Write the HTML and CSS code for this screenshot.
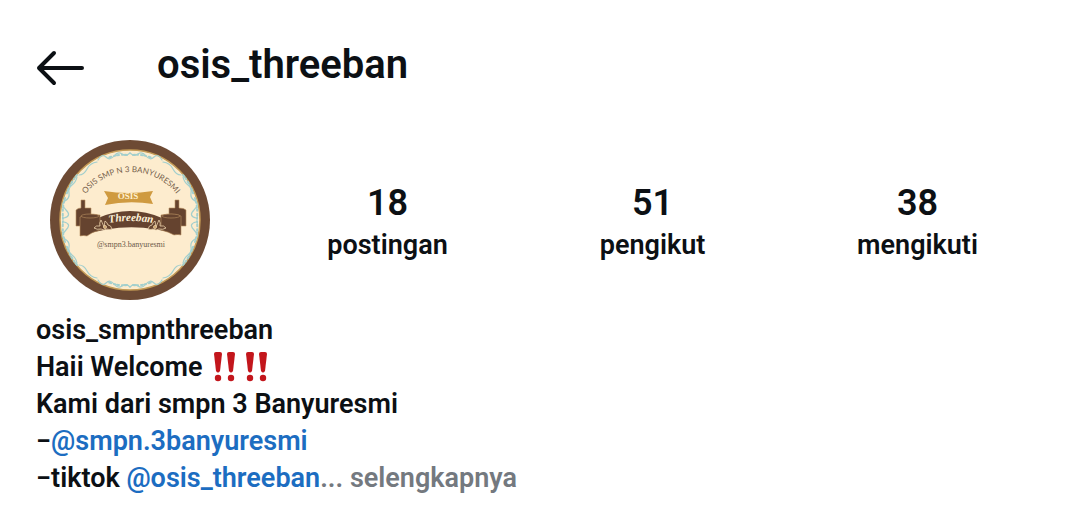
FILE: index.html
```html
<!DOCTYPE html>
<html lang="id">
<head>
<meta charset="utf-8">
<meta name="viewport" content="width=device-width, initial-scale=1">
<title>osis_threeban</title>
<link rel="stylesheet" href="styles.css">
</head>
<body>
<header class="topbar">
  <button class="back" type="button" aria-label="Kembali">
    <svg class="back-icon" viewBox="0 0 50 36" fill="none" stroke="currentColor" stroke-width="4" stroke-linecap="round" stroke-linejoin="round" aria-hidden="true">
      <path d="M46 18H3M18 3L3 18l15 15"/>
    </svg>
  </button>
  <h1 class="username">osis_threeban</h1>
</header>
<main class="profile">
  <section class="summary">
    <svg class="avatar" viewBox="0 0 160 160" role="img" aria-label="Logo OSIS SMPN 3 Banyuresmi">
      <defs>
        <path id="arc" d="M32 59A58 58 0 0 1 130 59"/>
        <path id="ribbon-text" d="M54 84Q80 78 108 84"/>
        <g id="flourish" fill="none" stroke="#a3cfcd" stroke-linecap="round">
          <path stroke-width="1.2" d="M80 13q-4 4-8 1t-8 2-8 1-8 3M47 22q-7 1-10 7t-8 6M27 37q-1 5-5 8t-3 8-4 8 1 9-2 8"/>
          <path stroke-width="2" stroke-dasharray="2 2 1 3" d="M77 15q-10-1-19 3M27 35q-8 10-11 21M15 58q-3 10-2 21"/>
        </g>
      </defs>
      <circle cx="80" cy="80" r="80" fill="#6d4a34"/>
      <circle cx="80" cy="80" r="70" fill="#fdecce" stroke="#c39a55" stroke-width="1.5"/>
      <use href="#flourish"/>
      <use href="#flourish" transform="matrix(-1 0 0 1 160 0)"/>
      <use href="#flourish" transform="matrix(1 0 0 -1 0 160)"/>
      <use href="#flourish" transform="rotate(180 80 80)"/>
      <text class="seal-arc"><textPath href="#arc" startOffset="50%">OSIS SMP N 3 BANYURESMI</textPath></text>
      <path fill="#cf9a40" d="M54 51Q78 55 103 51L100 57l3 7Q79 60 55 65l3-7z"/>
      <text class="seal-tag" x="78" y="59">OSIS</text>
      <g fill="#65432f" stroke="#b99161" stroke-width=".6">
        <path d="M31 60h4v8h6v18H26V70q2-2 5-2z"/>
        <path d="M129 60h-4v8h-6v18h17V70q-2-2-7-2z"/>
      </g>
      <path fill="#65432f" d="M48 78Q80 64 112 78L129 95Q80 79 31 96z"/>
      <g fill="#65432f" stroke="#b99161" stroke-width=".6">
        <path d="M30 77q7-3 20-2v15q-8 2-13 6-4-1-7 0z"/>
        <path d="M131 76q-8-3-20-1v15q8 2 13 5 4-1 7 0z"/>
        <ellipse cx="40" cy="76" rx="9" ry="2"/>
        <ellipse cx="121" cy="76" rx="9" ry="2"/>
      </g>
      <g fill="#65432f" stroke="#ecd3ad" stroke-width=".8">
        <path d="M54 87q-2-5-3-7-2 3-1 6-4-1-6 2 3 2 7 1 3 2 6 0 2 1 5 0-1-4-4-4-1-3-3-4z"/>
        <path d="M106 87q2-5 3-7 2 3 1 6 4-1 6 2-3 2-7 1-3 2-6 0-2 1-5 0 1-4 4-4 1-3 3-4z"/>
        <circle cx="55" cy="87" r="1.5" fill="#c99f65"/>
        <circle cx="105" cy="87" r="1.5" fill="#c99f65"/>
      </g>
      <text class="seal-name"><textPath href="#ribbon-text" startOffset="50%">Threeban</textPath></text>
      <text class="seal-handle" x="81" y="107">@smpn3.banyuresmi</text>
    </svg>
    <ul class="stats">
      <li class="stat"><strong class="count">18</strong><span class="label">postingan</span></li>
      <li class="stat"><strong class="count">51</strong><span class="label">pengikut</span></li>
      <li class="stat"><strong class="count">38</strong><span class="label">mengikuti</span></li>
    </ul>
  </section>
  <section class="bio">
    <p class="line">osis_smpnthreeban</p>
    <p class="line">Haii Welcome
      <svg class="marks" viewBox="0 0 54 30" role="img" aria-label="‼️‼️">
        <defs>
          <g id="mark" fill="#c3161c">
            <path d="M0 2Q0 0 2 0h4q2 0 2 2L6 19q-2 3-4 0z"/>
            <circle cx="4" cy="26" r="3.2"/>
          </g>
        </defs>
        <use href="#mark"/><use href="#mark" x="13"/><use href="#mark" x="32"/><use href="#mark" x="45"/>
      </svg>
    </p>
    <p class="line">Kami dari smpn 3 Banyuresmi</p>
    <p class="line">−<a class="mention" href="#smpn.3banyuresmi">@smpn.3banyuresmi</a></p>
    <p class="line">−tiktok <a class="mention" href="#osis_threeban">@osis_threeban</a><button class="more" type="button">... selengkapnya</button></p>
  </section>
</main>
</body>
</html>
```
FILE: styles.css
```css
* { box-sizing: border-box; }
body {
  margin: 0;
  background: #fff;
  color: #0c1014;
  font-family: Roboto, "Liberation Sans", sans-serif;
}
button {
  padding: 0;
  border: 0;
  background: none;
  color: inherit;
  font: inherit;
  cursor: pointer;
}
.topbar {
  display: flex;
  align-items: center;
  gap: 71px;
  padding: 41px 36px 0;
}
.back { display: flex; padding-top: 6px; }
.back-icon { width: 50px; height: 36px; }
.username {
  margin: 0;
  font-size: 40px;
  line-height: 48px;
  font-weight: 600;
}
.profile { padding: 51px 30px 0 36px; }
.summary {
  display: flex;
  align-items: center;
  gap: 45px;
  padding-left: 14px;
}
.avatar { flex: none; width: 160px; height: 160px; }
.stats {
  display: grid;
  flex: 1;
  grid-template-columns: repeat(3, 1fr);
  margin: 0;
  padding: 6px 0 0;
  list-style: none;
}
.stat { display: flex; flex-direction: column; align-items: center; }
.count { font-size: 36px; line-height: 44px; font-weight: 600; }
.label { font-size: 27px; line-height: 40px; font-weight: 600; }
.bio { padding-top: 12px; }
.line {
  margin: 0;
  font-size: 27px;
  line-height: 37px;
  font-weight: 600;
}
.marks { width: 54px; height: 30px; margin-left: 5px; vertical-align: -6px; }
.mention { color: #1c6dc1; text-decoration: none; }
.more { color: #74797f; }
.seal-arc, .seal-tag, .seal-name, .seal-handle { text-anchor: middle; }
.seal-arc { fill: #75604c; font: 8px Lato, sans-serif; }
.seal-tag { fill: #fff0cf; font: bold 9px "Liberation Serif", serif; }
.seal-name { fill: #fff3dc; font: italic bold 11px "Liberation Serif", serif; }
.seal-handle { fill: #6c5947; font: 8px "Liberation Serif", serif; }
```
